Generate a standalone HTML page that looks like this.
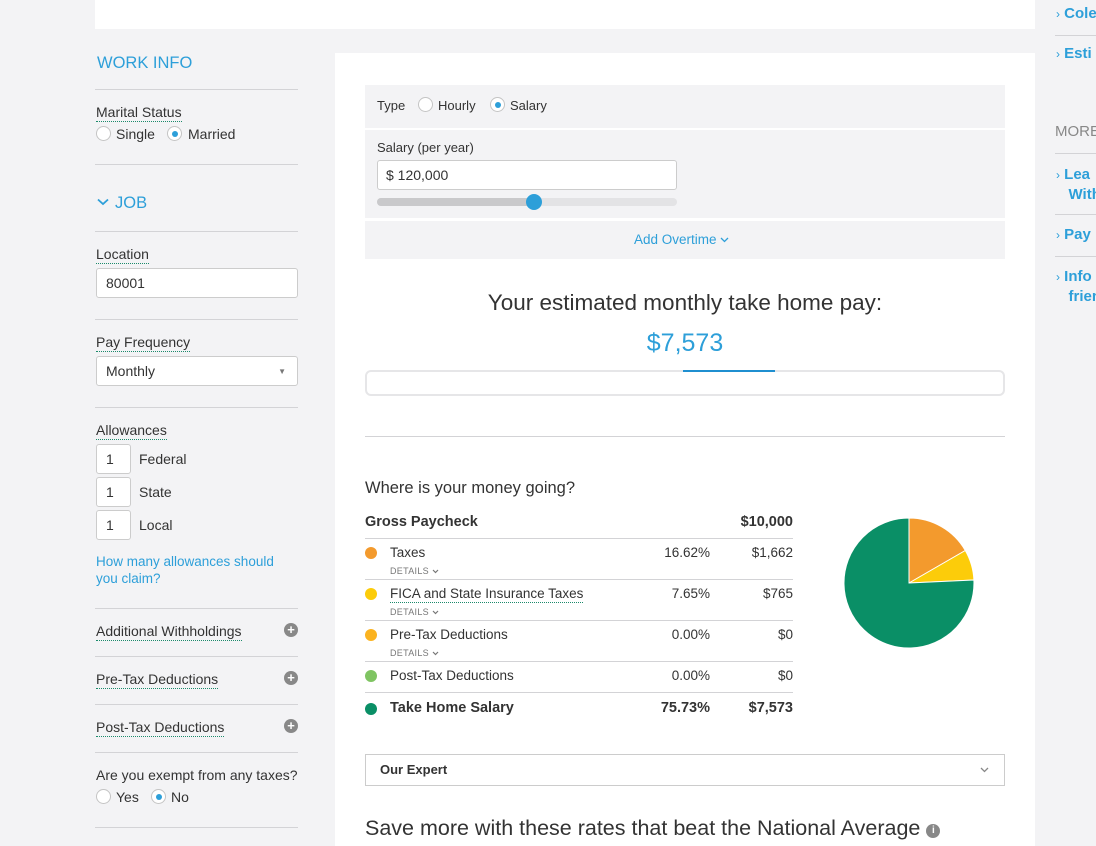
<!DOCTYPE html>
<html><head><meta charset="utf-8"><style>
*{box-sizing:border-box;margin:0;padding:0}
body{width:1096px;height:846px;overflow:hidden;background:#f3f3f5;font-family:"Liberation Sans",sans-serif;color:#333;position:relative;font-size:14px}
.a{position:absolute;white-space:nowrap}
.hr{position:absolute;height:1px;background:#d3d3d6}
.blue{color:#2d9fd9}
.u{border-bottom:1px dotted #1b8a6b;padding-bottom:1px}
.rad{position:absolute;width:15px;height:15px;border-radius:50%;border:1px solid #c4c4c4;background:#fff}
.rad.on::after{content:"";position:absolute;left:3.5px;top:3.5px;width:6px;height:6px;border-radius:50%;background:#2d9fd9}
.inp{position:absolute;background:#fff;border:1px solid #ccc;border-radius:3px;padding-left:9px;font-size:14px;color:#333;display:flex;align-items:center}
.plus{position:absolute;width:14px;height:14px;border-radius:50%;background:#888;color:#fff;font-weight:bold;font-size:13px;line-height:14px;text-align:center}
.dot{position:absolute;width:12px;height:12px;border-radius:50%}
.det{position:absolute;font-size:9px;color:#777;letter-spacing:.3px}
.chev{display:inline-block;vertical-align:middle}
</style></head><body>
<div class="a" style="left:95px;top:0;width:940px;height:29px;background:#fff"></div>
<div class="a" style="left:335px;top:53px;width:700px;height:793px;background:#fff"></div>

<!-- left column -->
<div class="a blue" style="left:97px;top:54px;font-size:16.5px">WORK INFO</div>
<div class="hr" style="left:95px;top:89px;width:203px"></div>
<div class="a" style="left:96px;top:104px"><span class="u">Marital Status</span></div>
<div class="rad" style="left:96px;top:126px"></div><div class="a" style="left:116px;top:126px">Single</div>
<div class="rad on" style="left:167px;top:126px"></div><div class="a" style="left:188px;top:126px">Married</div>
<div class="hr" style="left:95px;top:164px;width:203px"></div>
<svg class="a" style="left:97px;top:198px" width="12" height="8" viewBox="0 0 12 8"><path d="M1 1.5 L6 6 L11 1.5" fill="none" stroke="#2d9fd9" stroke-width="1.8"/></svg>
<div class="a blue" style="left:115px;top:194px;font-size:16.5px">JOB</div>
<div class="hr" style="left:95px;top:231px;width:203px"></div>
<div class="a" style="left:96px;top:246px"><span class="u">Location</span></div>
<div class="inp" style="left:96px;top:268px;width:202px;height:30px">80001</div>
<div class="hr" style="left:95px;top:319px;width:203px"></div>
<div class="a" style="left:96px;top:334px"><span class="u">Pay Frequency</span></div>
<div class="inp" style="left:96px;top:356px;width:202px;height:30px">Monthly<span style="position:absolute;right:11px;font-size:8px;color:#777">&#9660;</span></div>
<div class="hr" style="left:95px;top:407px;width:203px"></div>
<div class="a" style="left:96px;top:422px"><span class="u">Allowances</span></div>
<div class="inp" style="left:96px;top:444px;width:35px;height:30px">1</div><div class="a" style="left:139px;top:451px">Federal</div>
<div class="inp" style="left:96px;top:477px;width:35px;height:30px">1</div><div class="a" style="left:139px;top:484px">State</div>
<div class="inp" style="left:96px;top:510px;width:35px;height:30px">1</div><div class="a" style="left:139px;top:517px">Local</div>
<div class="a blue" style="left:96px;top:553px;font-size:13.5px;line-height:17px">How many allowances should<br>you claim?</div>
<div class="hr" style="left:95px;top:608px;width:203px"></div>
<div class="a" style="left:96px;top:623px"><span class="u">Additional Withholdings</span></div><div class="plus" style="left:284px;top:623px">+</div>
<div class="hr" style="left:95px;top:656px;width:203px"></div>
<div class="a" style="left:96px;top:671px"><span class="u">Pre-Tax Deductions</span></div><div class="plus" style="left:284px;top:671px">+</div>
<div class="hr" style="left:95px;top:704px;width:203px"></div>
<div class="a" style="left:96px;top:719px"><span class="u">Post-Tax Deductions</span></div><div class="plus" style="left:284px;top:719px">+</div>
<div class="hr" style="left:95px;top:752px;width:203px"></div>
<div class="a" style="left:96px;top:767px">Are you exempt from any taxes?</div>
<div class="rad" style="left:96px;top:789px"></div><div class="a" style="left:116px;top:789px">Yes</div>
<div class="rad on" style="left:151px;top:789px"></div><div class="a" style="left:171px;top:789px">No</div>
<div class="hr" style="left:95px;top:827px;width:203px"></div>

<!-- main -->
<div class="a" style="left:365px;top:85px;width:640px;height:43px;background:#f3f3f5"></div>
<div class="a" style="left:377px;top:98px;font-size:13px">Type</div>
<div class="rad" style="left:418px;top:97px"></div><div class="a" style="left:438px;top:98px;font-size:13px">Hourly</div>
<div class="rad on" style="left:490px;top:97px"></div><div class="a" style="left:510px;top:98px;font-size:13px">Salary</div>
<div class="a" style="left:365px;top:130px;width:640px;height:88px;background:#f3f3f5"></div>
<div class="a" style="left:377px;top:140px;font-size:13px">Salary (per year)</div>
<div class="inp" style="left:377px;top:160px;width:300px;height:30px;padding-left:8px;font-size:14px">$ 120,000</div>
<div class="a" style="left:377px;top:198px;width:300px;height:8px;border-radius:4px;background:#e3e3e5"></div>
<div class="a" style="left:377px;top:198px;width:157px;height:8px;border-radius:4px;background:#c9c9cb"></div>
<div class="a" style="left:526px;top:194px;width:16px;height:16px;border-radius:50%;background:#2d9fd9"></div>
<div class="a" style="left:365px;top:221px;width:640px;height:38px;background:#f3f3f5"></div>
<div class="a blue" style="left:634px;top:232px;font-size:13.5px">Add Overtime <svg class="chev" width="9" height="6" viewBox="0 0 9 6"><path d="M1 1 L4.5 4.5 L8 1" fill="none" stroke="#2d9fd9" stroke-width="1.3"/></svg></div>
<div class="a" style="left:365px;top:290px;width:640px;text-align:center;font-size:22.5px;color:#333">Your estimated monthly take home pay:</div>
<div class="a blue" style="left:365px;top:329px;width:640px;text-align:center;font-size:25px">$7,573</div>
<div class="a" style="left:365px;top:370px;width:640px;height:26px;border:2px solid #e6e6e8;border-radius:6px"></div>
<div class="a" style="left:683px;top:370px;width:92px;height:2px;background:#1f8fd0"></div>
<div class="hr" style="left:365px;top:436px;width:640px"></div>
<div class="a" style="left:365px;top:479px;font-size:16.5px">Where is your money going?</div>

<div class="a" style="left:365px;top:514px;font-size:14.5px;font-weight:bold">Gross Paycheck</div>
<div class="a" style="left:693px;top:514px;width:100px;text-align:right;font-size:14.5px;font-weight:bold">$10,000</div>
<div class="hr" style="left:365px;top:538px;width:428px"></div>
<div class="dot" style="left:365px;top:547px;background:#f39a2d"></div>
<div class="a" style="left:390px;top:545px;font-size:13.5px">Taxes</div>
<div class="a" style="left:610px;top:545px;width:100px;text-align:right;font-size:13.5px">16.62%</div>
<div class="a" style="left:693px;top:545px;width:100px;text-align:right;font-size:13.5px">$1,662</div>
<div class="det" style="left:390px;top:566px">DETAILS <svg class="chev" width="7" height="5" viewBox="0 0 7 5"><path d="M1 1 L3.5 3.5 L6 1" fill="none" stroke="#777" stroke-width="1.2"/></svg></div>
<div class="hr" style="left:365px;top:579px;width:428px"></div>
<div class="dot" style="left:365px;top:588px;background:#fccc0a"></div>
<div class="a" style="left:390px;top:586px;font-size:13.5px"><span class="u">FICA and State Insurance Taxes</span></div>
<div class="a" style="left:610px;top:586px;width:100px;text-align:right;font-size:13.5px">7.65%</div>
<div class="a" style="left:693px;top:586px;width:100px;text-align:right;font-size:13.5px">$765</div>
<div class="det" style="left:390px;top:607px">DETAILS <svg class="chev" width="7" height="5" viewBox="0 0 7 5"><path d="M1 1 L3.5 3.5 L6 1" fill="none" stroke="#777" stroke-width="1.2"/></svg></div>
<div class="hr" style="left:365px;top:620px;width:428px"></div>
<div class="dot" style="left:365px;top:629px;background:#fbb320"></div>
<div class="a" style="left:390px;top:627px;font-size:13.5px">Pre-Tax Deductions</div>
<div class="a" style="left:610px;top:627px;width:100px;text-align:right;font-size:13.5px">0.00%</div>
<div class="a" style="left:693px;top:627px;width:100px;text-align:right;font-size:13.5px">$0</div>
<div class="det" style="left:390px;top:648px">DETAILS <svg class="chev" width="7" height="5" viewBox="0 0 7 5"><path d="M1 1 L3.5 3.5 L6 1" fill="none" stroke="#777" stroke-width="1.2"/></svg></div>
<div class="hr" style="left:365px;top:661px;width:428px"></div>
<div class="dot" style="left:365px;top:670px;background:#7fc462"></div>
<div class="a" style="left:390px;top:668px;font-size:13.5px">Post-Tax Deductions</div>
<div class="a" style="left:610px;top:668px;width:100px;text-align:right;font-size:13.5px">0.00%</div>
<div class="a" style="left:693px;top:668px;width:100px;text-align:right;font-size:13.5px">$0</div>
<div class="hr" style="left:365px;top:692px;width:428px"></div>
<div class="dot" style="left:365px;top:703px;background:#0a8f66"></div>
<div class="a" style="left:390px;top:700px;font-size:14.5px;font-weight:bold">Take Home Salary</div>
<div class="a" style="left:610px;top:700px;width:100px;text-align:right;font-size:14.5px;font-weight:bold">75.73%</div>
<div class="a" style="left:693px;top:700px;width:100px;text-align:right;font-size:14.5px;font-weight:bold">$7,573</div>

<svg class="a" style="left:835px;top:510px" width="150" height="150" viewBox="835 510 150 150">
<path d="M909 583 L909 518 A65 65 0 0 1 965.3 550.5 Z" fill="#f39a2d" stroke="#fff" stroke-width="1"/>
<path d="M909 583 L965.3 550.5 A65 65 0 0 1 973.9 580 Z" fill="#fccc0a" stroke="#fff" stroke-width="1"/>
<path d="M909 583 L973.9 580 A65 65 0 1 1 909 518 Z" fill="#0a8f66" stroke="#fff" stroke-width="1"/>
</svg>

<div class="a" style="left:365px;top:754px;width:640px;height:32px;border:1px solid #ccc"></div>
<div class="a" style="left:380px;top:762px;font-size:13px;font-weight:bold">Our Expert</div>
<svg class="a" style="left:980px;top:767px" width="9" height="6" viewBox="0 0 9 6"><path d="M1 1 L4.5 4.5 L8 1" fill="none" stroke="#888" stroke-width="1.3"/></svg>
<div class="a" style="left:365px;top:816px;font-size:21.5px">Save more with these rates that beat the National Average <span style="display:inline-block;width:14px;height:14px;border-radius:50%;background:#888;color:#fff;font-size:10px;line-height:14px;text-align:center;font-weight:bold;vertical-align:2px">i</span></div>

<!-- right -->
<div class="a blue" style="left:1056px;top:5px;font-size:15px;font-weight:bold"><span style="font-weight:normal;font-size:12px">&#8250;</span> Cole</div>
<div class="hr" style="left:1055px;top:35px;width:41px"></div>
<div class="a blue" style="left:1056px;top:45px;font-size:15px;font-weight:bold"><span style="font-weight:normal;font-size:12px">&#8250;</span> Esti</div>
<div class="a" style="left:1055px;top:123px;font-size:15px;color:#888">MORE</div>
<div class="hr" style="left:1055px;top:153px;width:41px"></div>
<div class="a blue" style="left:1056px;top:165px;font-size:15px;font-weight:bold;line-height:20px"><span style="font-weight:normal;font-size:12px">&#8250;</span> Lea<br>&nbsp;&nbsp;&nbsp;With</div>
<div class="hr" style="left:1055px;top:214px;width:41px"></div>
<div class="a blue" style="left:1056px;top:226px;font-size:15px;font-weight:bold"><span style="font-weight:normal;font-size:12px">&#8250;</span> Pay</div>
<div class="hr" style="left:1055px;top:256px;width:41px"></div>
<div class="a blue" style="left:1056px;top:267px;font-size:15px;font-weight:bold;line-height:20px"><span style="font-weight:normal;font-size:12px">&#8250;</span> Info<br>&nbsp;&nbsp;&nbsp;frien</div>
</body></html>
